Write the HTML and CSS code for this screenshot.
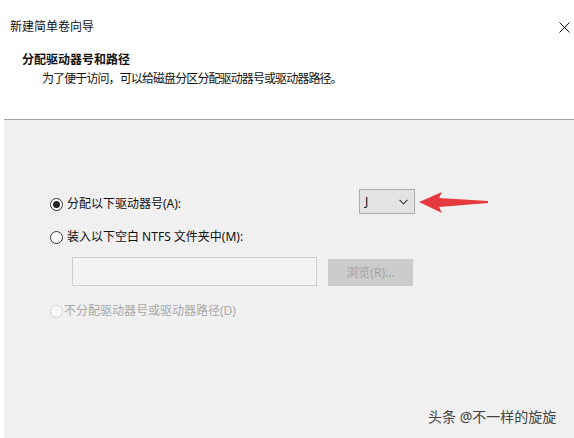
FILE: index.html
```html
<!DOCTYPE html>
<html lang="zh-CN">
<head>
  <meta charset="UTF-8">
  <title>新建简单卷向导</title>
  <link rel="stylesheet" href="styles.css">
</head>
<body>
  <div class="wizard">
    <!-- Cabecera blanca -->
    <div class="header">
      <div class="titlebar">
        <span class="title">新建简单卷向导</span>
        <svg class="close" width="11" height="11" viewBox="0 0 11 11">
          <path d="M0.5 0.5 L10.5 10.5 M10.5 0.5 L0.5 10.5" stroke="#111" stroke-width="1" fill="none"/>
        </svg>
      </div>
      <div class="page-title">分配驱动器号和路径</div>
      <div class="page-sub">为了便于访问，可以给磁盘分区分配驱动器号或驱动器路径。</div>
    </div>

    <!-- Opciones -->
    <div class="content">
      <div class="row row-letter">
        <label class="option">
          <span class="radio checked"></span>
          <span>分配以下驱动器号(A):</span>
        </label>
        <div class="combo">
          <span>J</span>
          <svg width="9" height="6" viewBox="0 0 9 6">
            <path d="M0.5 0.8 L4.5 4.8 L8.5 0.8" stroke="#333" stroke-width="1.1" fill="none"/>
          </svg>
        </div>
        <svg class="pointer" width="70" height="24" viewBox="0 0 70 24">
          <polygon points="0,11 23,1 20,7 69,10 69,12 20,16 23,22" fill="#e63a3f"/>
        </svg>
      </div>

      <div class="row">
        <label class="option">
          <span class="radio"></span>
          <span>装入以下空白 NTFS 文件夹中(M):</span>
        </label>
      </div>

      <div class="row row-path">
        <div class="path-box"></div>
        <div class="browse">浏览(R)...</div>
      </div>

      <div class="row row-none">
        <label class="option disabled">
          <span class="radio"></span>
          <span>不分配驱动器号或驱动器路径(D)</span>
        </label>
      </div>
    </div>

    <div class="watermark">头条 @不一样的旋旋</div>
  </div>
</body>
</html>
```

FILE: styles.css
```css
body {
  margin: 0;
  background: #fff;
  font-family: "Noto Sans", "Noto Sans CJK SC", sans-serif;
  font-size: 12px;
  color: #111;
}
.wizard {
  position: relative;
  width: 574px;
  height: 438px;
  display: flex;
  flex-direction: column;
}
.header {
  height: 119px;
  background: #fff;
  border-bottom: 1px solid #a0a0a0;
  margin-left: 4px;
}
.titlebar {
  display: flex;
  justify-content: space-between;
  align-items: center;
  padding: 20px 4px 0 6px;
  height: 14px;
  line-height: 14px;
}
.close {
  margin-top: 1px;
}
.page-title {
  margin: 17px 0 0 18px;
  font-weight: bold;
  line-height: 18px;
}
.page-sub {
  margin: 1px 0 0 38px;
  line-height: 18px;
  letter-spacing: -0.9px;
}
.content {
  flex: 1;
  margin-left: 4px;
  background: #f0f0f0;
  padding: 69px 0 0 46px;
}
.row {
  display: flex;
  align-items: center;
}
.row-letter {
  height: 25px;
}
.row-letter .option {
  width: 309px;
  margin-top: 5px;
}
.option {
  display: flex;
  align-items: center;
  gap: 4px;
  height: 16px;
  line-height: 16px;
}
.row-letter + .row {
  margin-top: 15px;
}
.radio {
  width: 11px;
  height: 11px;
  border: 1px solid #333;
  border-radius: 50%;
  background: #fff;
  display: flex;
  align-items: center;
  justify-content: center;
}
.radio.checked::after {
  content: "";
  width: 7px;
  height: 7px;
  border-radius: 50%;
  background: #222;
}
.combo {
  width: 56px;
  height: 25px;
  box-sizing: border-box;
  border: 1px solid #adadad;
  background: #e3e3e3;
  display: flex;
  align-items: center;
  justify-content: space-between;
  padding: 0 6px 0 5px;
}
.pointer {
  margin-left: 4px;
  margin-top: 2px;
}
.row-path {
  margin: 12px 0 0 22px;
  gap: 11px;
}
.path-box {
  width: 243px;
  height: 27px;
  border: 1px solid #cfcfcf;
  background: #f3f3f3;
}
.browse {
  width: 85px;
  height: 27px;
  background: #cccccc;
  color: #a3a3a3;
  display: flex;
  align-items: center;
  justify-content: center;
  margin-top: 1px;
}
.row-none {
  margin-top: 17px;
}
.option.disabled {
  color: #a8a8a8;
  gap: 1px;
}
.option.disabled .radio {
  border-color: #d4d4d4;
  background: #f7f7f7;
}
.watermark {
  position: absolute;
  left: 428px;
  top: 408px;
  font-size: 14px;
  line-height: 18px;
  color: #444;
}
```
